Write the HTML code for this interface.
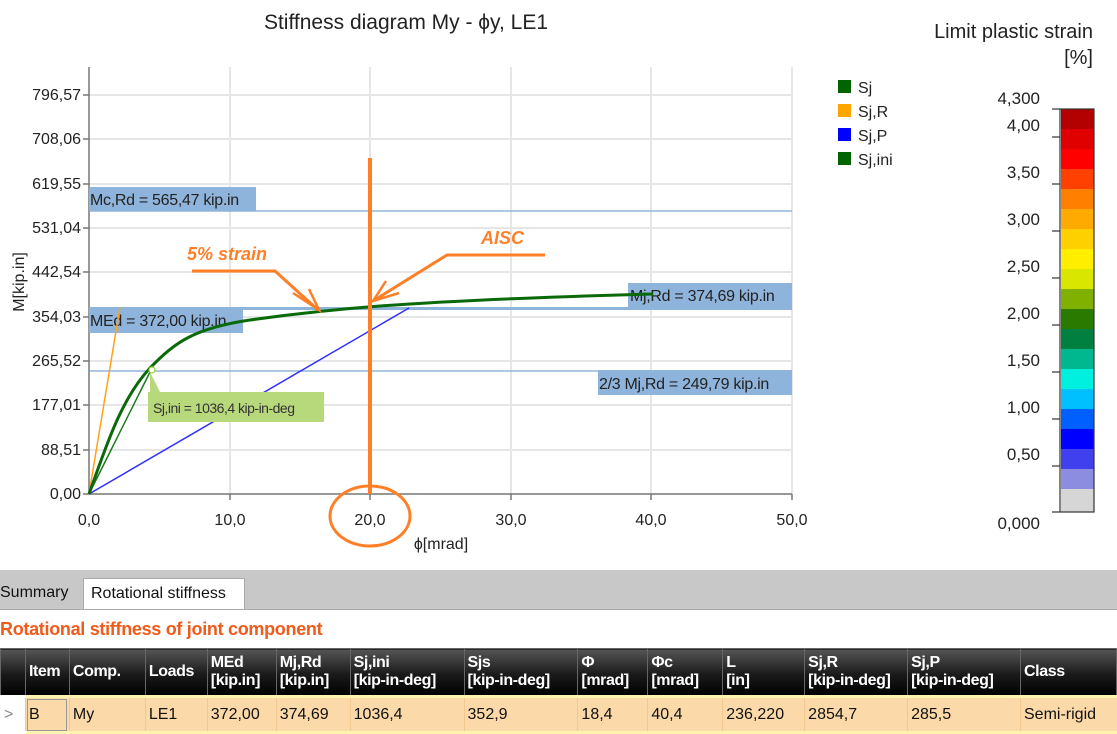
<!DOCTYPE html>
<html><head><meta charset="utf-8"><style>
body{margin:0;width:1117px;height:734px;overflow:hidden;background:#fff;font-family:"Liberation Sans",sans-serif;position:relative}
svg{position:absolute;left:0;top:0}
.tabbar{position:absolute;left:0;top:570px;width:1117px;height:39px;background:#c8c8c8;border-bottom:1px solid #aaa}
.tab{position:absolute;top:8px;height:31px;font-size:16px;line-height:30px;color:#111}
.h2{position:absolute;left:0;top:619px;font-size:18px;font-weight:bold;color:#f05a1a;letter-spacing:-0.3px}
table{position:absolute;left:0;top:648px;border-collapse:collapse;font-size:16px;table-layout:fixed}
th{background:linear-gradient(#555,#1a1a1a 55%,#000);color:#fff;text-align:left;font-weight:bold;height:46px;padding:0 3px;border:1px solid #666;line-height:18px;vertical-align:middle;white-space:nowrap;letter-spacing:-0.4px}
td{background:#fcd9a8;height:33px;padding:0 3px;border-top:3px solid #fff3b0;border-bottom:3px solid #fff3b0;border-left:1px solid #f0c890;color:#111;white-space:nowrap}
</style></head><body>
<svg width="1117" height="570" viewBox="0 0 1117 570" font-family="Liberation Sans, sans-serif">
<text x="406" y="29" font-size="21" text-anchor="middle" fill="#222">Stiffness diagram My - ϕy, LE1</text>
<g stroke="#e6e6e6" stroke-width="2">
<line x1="89" y1="95" x2="792" y2="95"/><line x1="89" y1="139" x2="792" y2="139"/><line x1="89" y1="184" x2="792" y2="184"/><line x1="89" y1="228" x2="792" y2="228"/><line x1="89" y1="272" x2="792" y2="272"/><line x1="89" y1="317" x2="792" y2="317"/><line x1="89" y1="361" x2="792" y2="361"/><line x1="89" y1="405" x2="792" y2="405"/><line x1="89" y1="450" x2="792" y2="450"/>
<line x1="230" y1="67" x2="230" y2="494"/><line x1="370" y1="67" x2="370" y2="494"/><line x1="511" y1="67" x2="511" y2="494"/><line x1="651" y1="67" x2="651" y2="494"/><line x1="792" y1="67" x2="792" y2="494"/>
</g>
<g stroke="#777" stroke-width="1.5"><line x1="89" y1="67" x2="89" y2="494"/><line x1="89" y1="494" x2="792" y2="494"/>
<line x1="83" y1="95" x2="89" y2="95"/><line x1="83" y1="139" x2="89" y2="139"/><line x1="83" y1="184" x2="89" y2="184"/><line x1="83" y1="228" x2="89" y2="228"/><line x1="83" y1="272" x2="89" y2="272"/><line x1="83" y1="317" x2="89" y2="317"/><line x1="83" y1="361" x2="89" y2="361"/><line x1="83" y1="405" x2="89" y2="405"/><line x1="83" y1="450" x2="89" y2="450"/><line x1="83" y1="494" x2="89" y2="494"/>
<line x1="230" y1="494" x2="230" y2="500"/><line x1="370" y1="494" x2="370" y2="500"/><line x1="511" y1="494" x2="511" y2="500"/><line x1="651" y1="494" x2="651" y2="500"/><line x1="792" y1="494" x2="792" y2="500"/></g>
<g font-size="16" fill="#222" text-anchor="end">
<text x="81" y="100">796,57</text><text x="81" y="144">708,06</text><text x="81" y="189">619,55</text><text x="81" y="233">531,04</text><text x="81" y="277">442,54</text><text x="81" y="322">354,03</text><text x="81" y="366">265,52</text><text x="81" y="410">177,01</text><text x="81" y="455">88,51</text><text x="81" y="499">0,00</text></g>
<g font-size="16" fill="#222" text-anchor="middle"><text x="89" y="525">0,0</text><text x="230" y="525">10,0</text><text x="370" y="525">20,0</text><text x="511" y="525">30,0</text><text x="651" y="525">40,0</text><text x="792" y="525">50,0</text><text x="441" y="549">ϕ[mrad]</text></g>
<text transform="translate(24,282) rotate(-90)" font-size="16" fill="#222" text-anchor="middle">M[kip.in]</text>
<g stroke="#7ea6d3" stroke-width="1.2"><line x1="89" y1="211" x2="792" y2="211"/><line x1="89" y1="308" x2="792" y2="308"/><line x1="89" y1="371" x2="792" y2="371"/></g>
<g fill="#8fb4dc"><rect x="89" y="187" width="167" height="24"/><rect x="89" y="307" width="154" height="26"/><rect x="628" y="283" width="164" height="25"/><rect x="598" y="370" width="194" height="25"/><rect x="243" y="307" width="549" height="3"/></g>
<g font-size="16" fill="#222" letter-spacing="-0.3"><text x="90" y="205">Mc,Rd = 565,47 kip.in</text><text x="90" y="326">MEd = 372,00 kip.in</text><text x="630" y="301">Mj,Rd = 374,69 kip.in</text><text x="599" y="389">2/3 Mj,Rd = 249,79 kip.in</text></g>
<line x1="89" y1="494" x2="120" y2="307" stroke="#ffa21a" stroke-width="1.5"/>
<line x1="89" y1="494" x2="409" y2="308" stroke="#3030ff" stroke-width="1.5"/>
<line x1="89" y1="494" x2="150" y2="372" stroke="#1a7a1a" stroke-width="1.5"/>
<path d="M89,494 C105,450 120,400 150,368 C175,342 195,328 250,320 C300,313 340,309 380,306 C450,301 540,297 653,294" fill="none" stroke="#0a6a0a" stroke-width="3"/>
<path d="M150,372 L150,392 L160,392 Z" fill="#b8d87c"/>
<rect x="148" y="392" width="176" height="30" fill="#b8d87c"/>
<text x="153" y="413" font-size="14" fill="#333" letter-spacing="-0.5">Sj,ini = 1036,4 kip-in-deg</text>
<circle cx="152" cy="370" r="3" fill="#fff" stroke="#9acd32" stroke-width="1.2"/>
<rect x="838" y="80" width="13" height="13" fill="#006400"/><rect x="838" y="104" width="13" height="13" fill="#ffa500"/><rect x="838" y="128" width="13" height="13" fill="#0000ff"/><rect x="838" y="152" width="13" height="13" fill="#006400"/>
<g font-size="16" fill="#222"><text x="858" y="93">Sj</text><text x="858" y="117">Sj,R</text><text x="858" y="141">Sj,P</text><text x="858" y="165">Sj,ini</text></g>
<g stroke="#ff7f27" fill="none">
<line x1="370" y1="158" x2="370" y2="494" stroke-width="4"/>
<ellipse cx="370" cy="516" rx="40" ry="30" stroke-width="3"/>
<polyline points="192,271 275,271 318,310" stroke-width="3"/>
<polyline points="293,293 319,310 309,289" stroke-width="2.5"/>
<polyline points="545,255 447,255 373,301" stroke-width="3"/>
<polyline points="386,281 373,301 399,293" stroke-width="2.5"/>
</g>
<g font-size="18" font-weight="bold" font-style="italic" fill="#ff7f27"><text x="187" y="260">5% strain</text><text x="481" y="244">AISC</text></g>
<text x="1093" y="38" font-size="20" fill="#222" text-anchor="end">Limit plastic strain</text>
<text x="1093" y="64" font-size="20" fill="#222" text-anchor="end">[%]</text>
<g>
<rect x="1061" y="109" width="33" height="21" fill="#b30000"/><rect x="1061" y="129" width="33" height="21" fill="#e00000"/><rect x="1061" y="149" width="33" height="21" fill="#ff0000"/><rect x="1061" y="169" width="33" height="21" fill="#ff4000"/><rect x="1061" y="189" width="33" height="21" fill="#ff7f00"/><rect x="1061" y="209" width="33" height="21" fill="#ffaa00"/><rect x="1061" y="229" width="33" height="21" fill="#ffd000"/><rect x="1061" y="249" width="33" height="21" fill="#ffee00"/><rect x="1061" y="269" width="33" height="21" fill="#d8e600"/><rect x="1061" y="289" width="33" height="21" fill="#80b000"/><rect x="1061" y="309" width="33" height="21" fill="#2a7a00"/><rect x="1061" y="329" width="33" height="21" fill="#008040"/><rect x="1061" y="349" width="33" height="21" fill="#00b890"/><rect x="1061" y="369" width="33" height="21" fill="#00f0e0"/><rect x="1061" y="389" width="33" height="21" fill="#00c0ff"/><rect x="1061" y="409" width="33" height="21" fill="#0060ff"/><rect x="1061" y="429" width="33" height="21" fill="#0000ff"/><rect x="1061" y="449" width="33" height="21" fill="#4040ee"/><rect x="1061" y="469" width="33" height="21" fill="#8c8ce0"/><rect x="1061" y="489" width="33" height="23" fill="#d6d6d6"/>
<rect x="1060" y="109" width="34" height="403" fill="none" stroke="#333" stroke-width="1.2"/>
<g stroke="#333" stroke-width="1.2"><line x1="1052" y1="109" x2="1060" y2="109"/><line x1="1052" y1="137" x2="1060" y2="137"/><line x1="1052" y1="184" x2="1060" y2="184"/><line x1="1052" y1="231" x2="1060" y2="231"/><line x1="1052" y1="278" x2="1060" y2="278"/><line x1="1052" y1="325" x2="1060" y2="325"/><line x1="1052" y1="372" x2="1060" y2="372"/><line x1="1052" y1="419" x2="1060" y2="419"/><line x1="1052" y1="466" x2="1060" y2="466"/><line x1="1052" y1="512" x2="1060" y2="512"/></g>
<g font-size="17" fill="#222" text-anchor="end"><text x="1040" y="104">4,300</text><text x="1040" y="131">4,00</text><text x="1040" y="178">3,50</text><text x="1040" y="225">3,00</text><text x="1040" y="272">2,50</text><text x="1040" y="319">2,00</text><text x="1040" y="366">1,50</text><text x="1040" y="413">1,00</text><text x="1040" y="460">0,50</text><text x="1040" y="529">0,000</text></g>
</g>
</svg>
<div class="tabbar">
<div class="tab" style="left:0;width:80px;">Summary</div>
<div class="tab" style="left:83px;width:162px;background:#fff;border:1px solid #aaa;border-bottom:none;padding-left:7px;box-sizing:border-box">Rotational stiffness</div>
</div>
<div class="h2">Rotational stiffness of joint component</div>
<table>
<colgroup><col style="width:25px"><col style="width:44px"><col style="width:76px"><col style="width:62px"><col style="width:69px"><col style="width:74px"><col style="width:114px"><col style="width:114px"><col style="width:70px"><col style="width:75px"><col style="width:82px"><col style="width:103px"><col style="width:113px"><col style="width:96px"></colgroup>
<tr><th></th><th>Item</th><th>Comp.</th><th>Loads</th><th>MEd<br>[kip.in]</th><th>Mj,Rd<br>[kip.in]</th><th>Sj,ini<br>[kip-in-deg]</th><th>Sjs<br>[kip-in-deg]</th><th>Φ<br>[mrad]</th><th>Φc<br>[mrad]</th><th>L<br>[in]</th><th>Sj,R<br>[kip-in-deg]</th><th>Sj,P<br>[kip-in-deg]</th><th>Class</th></tr>
<tr><td style="background:#fff;color:#888;border-color:#fff">&gt;</td><td style="outline:1px solid #999;outline-offset:-3px">B</td><td>My</td><td>LE1</td><td>372,00</td><td>374,69</td><td>1036,4</td><td>352,9</td><td>18,4</td><td>40,4</td><td>236,220</td><td>2854,7</td><td>285,5</td><td>Semi-rigid</td></tr>
</table>
</body></html>
